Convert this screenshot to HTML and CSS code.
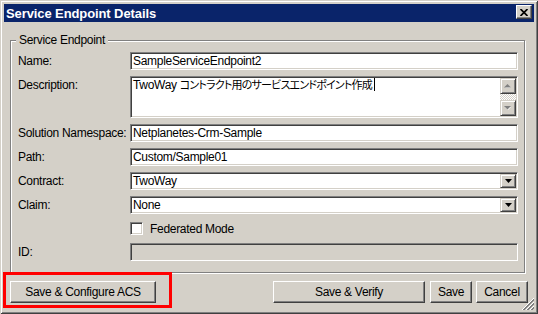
FILE: index.html
```html
<!DOCTYPE html>
<html lang="ja">
<head>
    <meta charset="UTF-8">
    <title>Service Endpoint Details</title>
    <link rel="stylesheet" href="styles.css">
</head>
<body>
    <div class="window">
        <div class="titlebar">
            <span class="title">Service Endpoint Details</span>
            <div class="close">
                <svg width="8" height="7" viewBox="0 0 8 7"><path d="M0.5 0 L7.5 7 M7.5 0 L0.5 7" stroke="#000" stroke-width="1.7" fill="none"/></svg>
            </div>
        </div>

        <div class="content">
            <div class="group">
                <span class="group-title">Service Endpoint</span>
                <div class="form">
                    <div class="label">Name:</div>
                    <div class="field">SampleServiceEndpoint2</div>

                    <div class="label">Description:</div>
                    <div class="field textarea">
                        <div class="text">TwoWay <span class="jp">コントラクト用のサービスエンドポイント作成</span><span class="caret"></span></div>
                        <div class="scrollbar">
                            <div class="sb-btn">
                                <svg width="8" height="5" viewBox="0 0 8 5"><path d="M4 1 L7 4 L1 4 Z" fill="#fff"/><path d="M3.5 0 L7 3.5 L0 3.5 Z" fill="#808080"/></svg>
                            </div>
                            <div class="sb-track"></div>
                            <div class="sb-btn">
                                <svg width="8" height="5" viewBox="0 0 8 5"><path d="M1 1 L7 1 L4 4 Z" fill="#fff"/><path d="M0 0 L7 0 L3.5 3.5 Z" fill="#808080"/></svg>
                            </div>
                        </div>
                    </div>

                    <div class="label">Solution Namespace:</div>
                    <div class="field">Netplanetes-Crm-Sample</div>

                    <div class="label">Path:</div>
                    <div class="field">Custom/Sample01</div>

                    <div class="label">Contract:</div>
                    <div class="field select">
                        <div class="text">TwoWay</div>
                        <div class="drop-btn">
                            <svg width="7" height="4" viewBox="0 0 7 4"><path d="M0 0 L7 0 L3.5 4 Z" fill="#000"/></svg>
                        </div>
                    </div>

                    <div class="label">Claim:</div>
                    <div class="field select">
                        <div class="text">None</div>
                        <div class="drop-btn">
                            <svg width="7" height="4" viewBox="0 0 7 4"><path d="M0 0 L7 0 L3.5 4 Z" fill="#000"/></svg>
                        </div>
                    </div>

                    <div class="label"></div>
                    <div class="check">
                        <span class="check-box"></span>
                        <span>Federated Mode</span>
                    </div>

                    <div class="label">ID:</div>
                    <div class="field disabled"></div>
                </div>
            </div>

            <div class="actions">
                <button class="btn btn-acs">Save &amp; Configure ACS</button>
                <button class="btn btn-verify">Save &amp; Verify</button>
                <button class="btn btn-save">Save</button>
                <button class="btn btn-cancel">Cancel</button>
            </div>
        </div>

        <!-- annotation round the ACS button -->
        <div class="highlight"></div>

        <svg class="grip" width="12" height="12" viewBox="0 0 12 12">
            <path d="M12 0 L0 12 M12 4 L4 12 M12 8 L8 12" stroke="#fff" fill="none"/>
            <path d="M12 1 L1 12 M12 2 L2 12 M12 5 L5 12 M12 6 L6 12 M12 9 L9 12 M12 10 L10 12" stroke="#808080" fill="none"/>
        </svg>
    </div>
</body>
</html>
```

FILE: styles.css
```css
body {
    margin: 0;
    font-family: "Liberation Sans", "Noto Sans CJK JP", sans-serif;
    font-size: 12px;
    letter-spacing: -0.3px;
    color: #000;
}

.window {
    position: relative;
    width: 538px;
    height: 314px;
    box-sizing: border-box;
    padding: 4px;
    background: #d4d0c8;
    box-shadow: inset 1px 1px #d4d0c8, inset -1px -1px #404040, inset 2px 2px #fff, inset -2px -2px #808080;
    display: flex;
    flex-direction: column;
}

.titlebar {
    height: 18px;
    background: #0a246a;
    color: #fff;
    display: flex;
    align-items: center;
    padding: 0 2px;
}

.title {
    flex: 1;
    font-weight: bold;
    font-size: 13px;
    letter-spacing: -0.1px;
}

.close {
    width: 16px;
    height: 14px;
    box-sizing: border-box;
    margin-bottom: 2px;
    background: #d4d0c8;
    border: 1px solid;
    border-color: #fff #404040 #404040 #fff;
    box-shadow: inset -1px -1px #808080;
    display: flex;
    align-items: center;
    justify-content: center;
}

.content {
    padding: 18px 6px 0 6px;
}

.group {
    border: 1px solid #808080;
    box-shadow: inset 1px 1px #fff, 1px 1px #fff;
    padding: 0 6px 11px 7px;
    margin-right: 3px;
}

.group-title {
    display: block;
    width: fit-content;
    height: 14px;
    line-height: 14px;
    margin: -8px 0 0 -2px;
    padding: 0 3px;
    background: #d4d0c8;
}

.form {
    display: grid;
    grid-template-columns: 112px 1fr;
    row-gap: 6px;
    margin-top: 5px;
}

.label {
    line-height: 18px;
    white-space: nowrap;
}

.field {
    height: 18px;
    box-sizing: border-box;
    border: 1px solid;
    border-color: #808080 #fff #fff #808080;
    box-shadow: inset 1px 1px #404040, inset -1px -1px #d4d0c8;
    background: #fff;
    display: flex;
    align-items: center;
    padding: 0 2px;
    white-space: nowrap;
    overflow: hidden;
}

.field .text {
    flex: 1;
}

.textarea {
    height: 42px;
    align-items: stretch;
    padding: 1px 1px 1px 2px;
    line-height: 14px;
}

.jp {
    font-size: 11px;
    font-feature-settings: "palt";
    letter-spacing: -0.8px;
}

.caret {
    display: inline-block;
    width: 1px;
    height: 13px;
    margin-left: 2px;
    background: #000;
    vertical-align: -2px;
}

.scrollbar {
    width: 16px;
    display: flex;
    flex-direction: column;
}

.sb-btn, .drop-btn {
    width: 16px;
    height: 16px;
    box-sizing: border-box;
    background: #d4d0c8;
    border: 1px solid;
    border-color: #d4d0c8 #404040 #404040 #d4d0c8;
    box-shadow: inset 1px 1px #fff, inset -1px -1px #808080;
    display: flex;
    align-items: center;
    justify-content: center;
}

.sb-track {
    flex: 1;
    background: repeating-conic-gradient(#fff 0 25%, #d4d0c8 0 50%) 0 0 / 2px 2px;
}

.select {
    padding: 1px 1px 1px 2px;
    align-items: stretch;
}

.select .text {
    display: flex;
    align-items: center;
}

.drop-btn {
    height: auto;
}

.check {
    height: 17px;
    display: flex;
    align-items: center;
    gap: 7px;
}

.check-box {
    width: 13px;
    height: 13px;
    box-sizing: border-box;
    border: 1px solid;
    border-color: #808080 #fff #fff #808080;
    box-shadow: inset 1px 1px #404040, inset -1px -1px #d4d0c8;
    background: #fff;
}

.field.disabled {
    background: #d4d0c8;
}

.actions {
    display: flex;
    gap: 4px;
    margin-top: 8px;
}

.btn {
    height: 22px;
    padding: 0;
    font: inherit;
    letter-spacing: inherit;
    color: #000;
    background: #d4d0c8;
    border: 1px solid;
    border-color: #fff #404040 #404040 #fff;
    box-shadow: inset -1px -1px #808080;
}

.btn-acs {
    width: 146px;
}

.btn-verify {
    width: 152px;
    margin-left: auto;
    margin-right: 1px;
}

.btn-save {
    width: 42px;
}

.btn-cancel {
    width: 52px;
}

.highlight {
    position: absolute;
    left: 3px;
    top: 272px;
    width: 169px;
    height: 36px;
    box-sizing: border-box;
    border: 3px solid #f00;
}

.grip {
    position: absolute;
    right: 4px;
    bottom: 4px;
}
```
